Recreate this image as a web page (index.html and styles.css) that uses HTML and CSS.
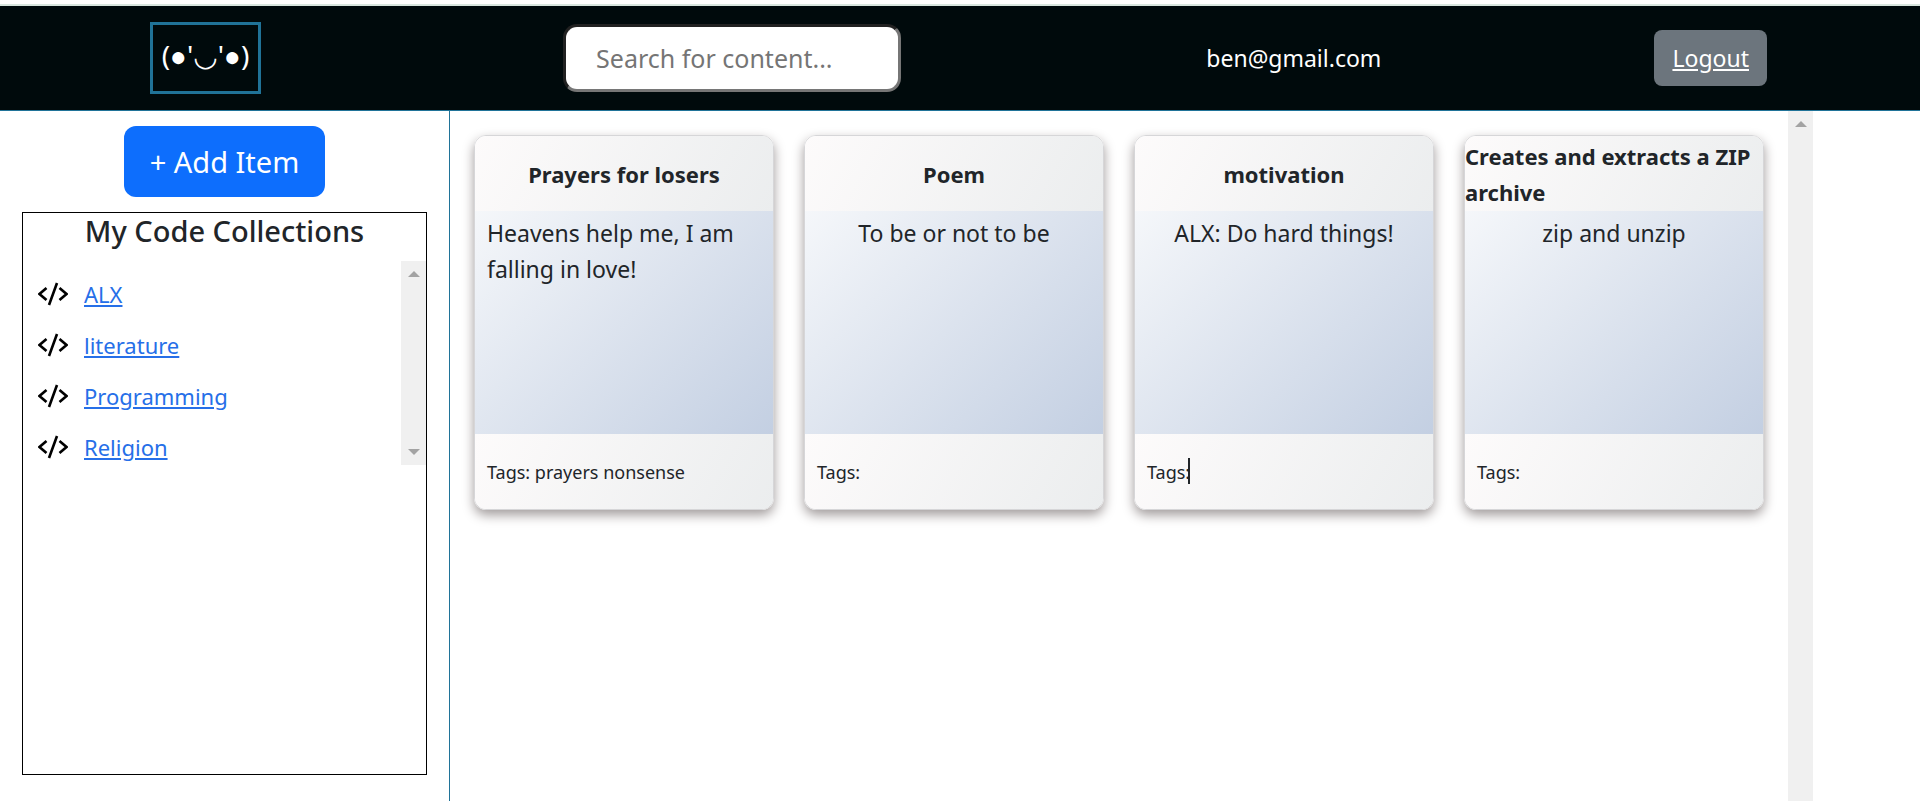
FILE: index.html
```html
<!DOCTYPE html>
<html lang="en">
<head>
<meta charset="utf-8">
<title>Code Collections</title>
<link rel="stylesheet" href="styles.css">
</head>
<body>
<svg class="defs" aria-hidden="true">
  <symbol id="code" viewBox="0 0 30 24">
    <path d="M8.500 6L1.500 12L8.500 18M21.500 6L28.500 12L21.500 18M19 1L11 23" fill="none" stroke="#000" stroke-width="2.600"/>
  </symbol>
</svg>
<header class="topbar">
  <div><a class="logo" href="#">(●'◡'●)</a></div>
  <form class="search"><input class="search-input" type="search" placeholder="Search for content..." aria-label="Search for content"></form>
  <span class="email">ben@gmail.com</span>
  <a class="logout" href="#">Logout</a>
</header>
<div class="layout">
  <aside class="sidebar">
    <button class="add-button" type="button">+ Add Item</button>
    <section class="collections">
      <h2 class="collections-title">My Code Collections</h2>
      <div class="scroller">
        <ul class="collection-list">
          <li class="collection"><svg class="code-icon" aria-hidden="true"><use href="#code"/></svg><a class="collection-link" href="#">ALX</a></li>
          <li class="collection"><svg class="code-icon" aria-hidden="true"><use href="#code"/></svg><a class="collection-link" href="#">literature</a></li>
          <li class="collection"><svg class="code-icon" aria-hidden="true"><use href="#code"/></svg><a class="collection-link" href="#">Programming</a></li>
          <li class="collection"><svg class="code-icon" aria-hidden="true"><use href="#code"/></svg><a class="collection-link" href="#">Religion</a></li>
        </ul>
        <div class="track"><span class="arrow-up"></span><span class="arrow-down"></span></div>
      </div>
    </section>
  </aside>
  <main class="cards">
    <article class="card">
      <h3 class="card-title">Prayers for losers</h3>
      <p class="card-body">Heavens help me, I am falling in love!</p>
      <footer class="card-tags"><span>Tags: prayers nonsense</span></footer>
    </article>
    <article class="card">
      <h3 class="card-title">Poem</h3>
      <p class="card-body">To be or not to be</p>
      <footer class="card-tags"><span>Tags:</span></footer>
    </article>
    <article class="card">
      <h3 class="card-title">motivation</h3>
      <p class="card-body">ALX: Do hard things!</p>
      <footer class="card-tags"><span class="caret-host">Tags:<span class="caret"></span></span></footer>
    </article>
    <article class="card">
      <h3 class="card-title">Creates and extracts a ZIP archive</h3>
      <p class="card-body">zip and unzip</p>
      <footer class="card-tags"><span>Tags:</span></footer>
    </article>
  </main>
  <div class="track"><span class="arrow-up"></span></div>
</div>
</body>
</html>
```
FILE: styles.css
```css
* { box-sizing: border-box; }

body {
  margin: 0;
  min-height: 100vh;
  padding-top: 4px;
  display: flex;
  flex-direction: column;
  background: #fff;
  color: #212529;
  font-family: "Segoe UI", "Noto Sans", "Liberation Sans", "DejaVu Sans", sans-serif;
  font-size: 23px;
  line-height: 36px;
}

.defs { position: absolute; width: 0; height: 0; }

.topbar {
  display: grid;
  grid-template-columns: 413fr 643fr 448fr auto;
  align-items: center;
  height: 107px;
  padding: 0 153px 0 150px;
  border-top: 2px solid #d8e6df;
  border-bottom: 1px solid #207398;
  background: #000a0c;
  color: #fff;
}

.logo {
  display: flex;
  justify-content: center;
  width: 111px;
  height: 72px;
  padding-top: 12px;
  border: 3px solid #207398;
  color: #fff;
  font-size: 28px;
  text-decoration: none;
}

.search { margin: 0; }

.search-input {
  display: block;
  width: 338px;
  height: 68px;
  padding: 0 30px;
  border: 3px inset #767676;
  border-radius: 14px;
  background: #fff;
  font: inherit;
  font-size: 25px;
}

.search-input::placeholder { color: #757575; }

.email { font-size: 23px; }

.logout {
  padding: 10px 18px;
  border-radius: 8px;
  background: #6c757d;
  color: #fff;
}

.layout {
  flex: 1;
  display: grid;
  grid-template-columns: 450fr 1338fr 25px 107fr;
}

.sidebar {
  display: flex;
  flex-direction: column;
  align-items: center;
  gap: 15px;
  padding: 15px 22px 26px;
  border-right: 1px solid #207398;
}

.add-button {
  height: 71px;
  padding: 0 26px;
  border: 0;
  border-radius: 12px;
  background: #0d6efd;
  color: #fff;
  font: inherit;
  font-size: 29px;
}

.collections {
  flex: 1;
  align-self: stretch;
  border: 1px solid #000;
}

.collections-title {
  margin: 0 0 12px;
  font-size: 29px;
  font-weight: 500;
  text-align: center;
}

.scroller { display: flex; height: 204px; }

.collection-list {
  flex: 1;
  margin: 0;
  padding: 7px 0 0 15px;
  list-style: none;
  overflow: hidden;
}

.collection { display: flex; align-items: center; gap: 16px; height: 51px; }

.code-icon { width: 30px; height: 24px; }

.collection-link { color: #266fe8; font-size: 22px; }

.track {
  display: flex;
  flex-direction: column;
  justify-content: space-between;
  align-items: center;
  width: 25px;
  padding: 10px 0;
  background: #f0f0f0;
}

.arrow-up, .arrow-down {
  border-left: 6px solid transparent;
  border-right: 6px solid transparent;
}

.arrow-up { border-bottom: 6px solid #a3a3a3; }
.arrow-down { border-top: 6px solid #a3a3a3; }

.cards {
  display: grid;
  grid-template-columns: repeat(4, 1fr);
  align-content: start;
  gap: 30px;
  padding: 24px;
}

.card {
  display: grid;
  grid-template-rows: 75px 223px 75px;
  border: 1px solid #d6d6d8;
  border-radius: 12px;
  overflow: hidden;
  box-shadow: 0 5px 12px #a19b9b;
}

.card-title, .card-tags { background: linear-gradient(120deg, #fdfbfb 0%, #ebedee 100%); }

.card-title {
  display: flex;
  align-items: center;
  justify-content: center;
  margin: 0;
  font-size: 22px;
  font-weight: 700;
}

.card-body {
  display: flex;
  justify-content: center;
  align-items: flex-start;
  margin: 0;
  padding: 4px 12px;
  background: linear-gradient(135deg, #f5f7fa 0%, #c3cfe2 100%);
}

.card-tags {
  display: flex;
  align-items: center;
  padding: 0 12px;
  font-size: 18px;
}

.caret-host { position: relative; }

.caret {
  position: absolute;
  right: 0;
  top: 4px;
  width: 2px;
  height: 26px;
  background: #212529;
}
```
